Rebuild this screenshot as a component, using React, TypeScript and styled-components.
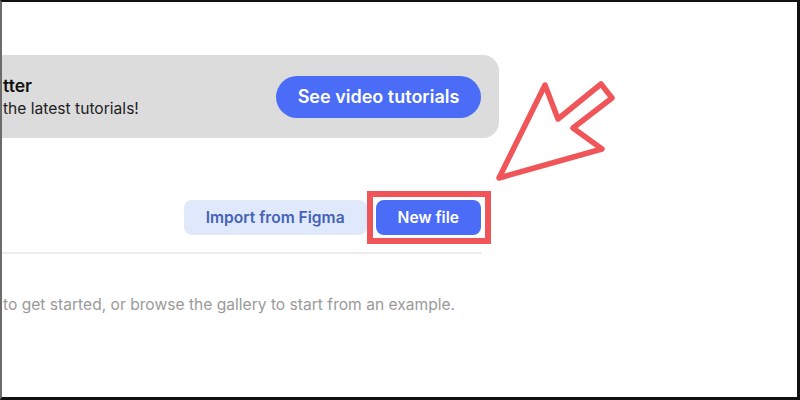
import { createGlobalStyle, styled } from "styled-components";

const GlobalStyle = createGlobalStyle`
  html, body {
    margin: 0;
    padding: 0;
    background: #ffffff;
  }
  body {
    font-family: Inter, "Noto Sans", "Liberation Sans", sans-serif;
    color: #1a1a1a;
  }
`;

export default function App() {
  return (
    <>
      <GlobalStyle />
      <Frame>
        <Main>
          <Banner>
            <BannerText>
              <BannerTitle>tter</BannerTitle>
              <BannerSubtitle>the latest tutorials!</BannerSubtitle>
            </BannerText>
            <PillButton>See video tutorials</PillButton>
          </Banner>

          <Actions>
            <ActionButton variant="secondary">Import from Figma</ActionButton>
            <ActionButton variant="primary" highlighted>
              New file
            </ActionButton>
          </Actions>

          <Divider />

          <EmptyHint>
            to get started, or browse the gallery to start from an example.
          </EmptyHint>
        </Main>

        <Pointer width="130" height="110" viewBox="490 76 130 110">
          <polygon
            points="499,178 545,85 558,119 601,84 612,98 573,128 602,149"
            fill="none"
            stroke="#f0555a"
            strokeWidth="5.5"
            strokeLinejoin="round"
          />
        </Pointer>
      </Frame>
    </>
  );
}

const Frame = styled.div`
  position: relative;
  box-sizing: border-box;
  width: 800px;
  height: 400px;
  overflow: hidden;
  border-top: 2px solid #111111;
  border-left: 2px solid #6b6b6b;
  border-right: 3px solid #111111;
  border-bottom: 3px solid #111111;
`;

const Main = styled.div`
  display: flex;
  flex-direction: column;
  width: 480px;
  padding-top: 53px;
`;

const Banner = styled.div`
  display: flex;
  align-items: center;
  justify-content: space-between;
  height: 83px;
  margin-right: -17px;
  padding: 0 18px 0 1px;
  background: #dcdcdc;
  border-radius: 0 16px 16px 0;
`;

const BannerText = styled.div`
  display: flex;
  flex-direction: column;
  gap: 3px;
  margin-top: 1px;
`;

const BannerTitle = styled.span`
  font-size: 17.6px;
  font-weight: 600;
  line-height: 20px;
  color: #111111;
`;

const BannerSubtitle = styled.span`
  font-size: 15.6px;
  font-weight: 400;
  line-height: 20px;
  color: #222222;
`;

const PillButton = styled.button`
  height: 42px;
  width: 205px;
  border: none;
  border-radius: 21px;
  background: #4a6cf6;
  color: #ffffff;
  font-family: inherit;
  font-size: 18px;
  font-weight: 600;
  cursor: pointer;
`;

const Actions = styled.div`
  display: flex;
  justify-content: flex-end;
  gap: 9px;
  margin-top: 62px;
  padding-right: 1px;
`;

const ActionButton = styled.button<{
  variant: "primary" | "secondary";
  highlighted?: boolean;
}>`
  position: relative;
  height: 35px;
  padding: 0 22px;
  border: none;
  border-radius: 8px;
  font-family: inherit;
  font-size: 15.6px;
  font-weight: 600;
  background: ${(p) => (p.variant === "primary" ? "#4a6cf6" : "#dfe9fb")};
  color: ${(p) => (p.variant === "primary" ? "#ffffff" : "#4462b6")};
  cursor: pointer;

  &::after {
    content: "";
    display: ${(p) => (p.highlighted ? "block" : "none")};
    position: absolute;
    left: -9px;
    right: -10px;
    top: -9px;
    bottom: -9px;
    border: 6px solid #f0555a;
    pointer-events: none;
  }
`;

const Divider = styled.hr`
  width: 100%;
  height: 2px;
  margin: 17px 0 0;
  border: none;
  background: #ececec;
`;

const EmptyHint = styled.p`
  margin: 41px 0 0;
  padding-left: 1px;
  font-size: 15.6px;
  line-height: 20px;
  color: #9a9a9a;
`;

const Pointer = styled.svg`
  position: absolute;
  left: 488px;
  top: 74px;
`;
